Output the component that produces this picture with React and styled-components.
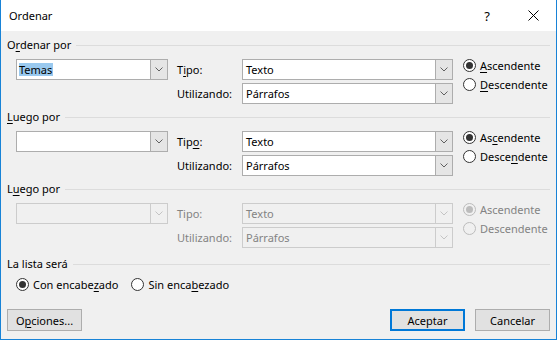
import React from 'react';
import styled, { createGlobalStyle } from 'styled-components';

const Global = createGlobalStyle`
  html, body { margin: 0; padding: 0; background: #ffffff; }
  body {
    font-family: "Segoe UI", "Noto Sans", sans-serif;
    font-size: 11px;
    color: #000000;
  }
  * { box-sizing: border-box; }
`;

const Window = styled.div`
  width: 557px;
  height: 340px;
  display: flex;
  flex-direction: column;
  background: #f0f0f0;
  border: 1px solid #1883d7;
  border-top: none;
`;

const TitleBar = styled.div`
  height: 31px;
  flex-shrink: 0;
  background: #ffffff;
  display: flex;
  align-items: center;
`;

const Title = styled.div`
  flex: 1;
  padding-left: 8px;
  font-size: 11px;
  line-height: 16px;
`;

const CaptionButton = styled.div`
  width: 46px;
  height: 31px;
  display: flex;
  align-items: center;
  justify-content: center;
  font-size: 13px;
  color: #000;
`;

const Body = styled.div`
  flex: 1;
  display: flex;
  flex-direction: column;
  padding: 6px 6px 8px 6px;
`;

const Section = styled.div`
  margin-top: ${p => p.$gap || 0}px;
`;

const Header = styled.div`
  height: 16px;
  display: flex;
  align-items: center;
  line-height: 16px;
  white-space: nowrap;
  &::after {
    content: '';
    flex: 1;
    height: 1px;
    margin-left: 5px;
    background: #dcdcdc;
  }
`;

const Content = styled.div`
  display: flex;
  align-items: flex-start;
  margin-top: 6px;
  padding-left: 9px;
`;

const Key = styled.span`
  text-decoration: underline;
  text-underline-offset: 2px;
`;

const ComboBox = styled.div`
  width: ${p => p.$w}px;
  height: 21px;
  flex-shrink: 0;
  display: flex;
  border: 1px solid ${p => (p.$disabled ? '#cccccc' : '#adadad')};
  background: ${p => (p.$disabled ? '#f0f0f0' : '#ffffff')};
`;

const ComboText = styled.div`
  flex: 1;
  padding-left: ${p => p.$pad}px;
  line-height: 19px;
  white-space: nowrap;
  overflow: hidden;
  color: ${p => (p.$disabled ? '#838383' : '#000000')};
`;

const Selected = styled.span`
  display: inline-block;
  background: #99c9ef;
  line-height: 13px;
  padding: 0 1px 0 0;
`;

const DropButton = styled.div`
  width: 17px;
  display: flex;
  align-items: center;
  justify-content: center;
  border-left: 1px solid ${p => (p.$disabled ? '#cccccc' : '#adadad')};
  background: ${p => (p.$disabled ? '#f0f0f0' : '#e5e5e5')};
`;

const Fields = styled.div`
  display: grid;
  grid-template-columns: 65px 211px;
  row-gap: 3px;
  align-items: center;
  margin-left: 9px;
`;

const FieldLabel = styled.div`
  color: ${p => (p.$disabled ? '#838383' : '#000000')};
  line-height: 16px;
`;

const RadioColumn = styled.div`
  display: flex;
  flex-direction: column;
  gap: 6px;
  margin-left: 10px;
`;

const RadioRow = styled.div`
  display: flex;
  gap: ${p => p.$gap || 0}px;
  margin-top: 6px;
  padding-left: 9px;
`;

const RadioItem = styled.label`
  display: flex;
  align-items: center;
  height: 13px;
  white-space: nowrap;
  color: ${p => (p.$disabled ? '#838383' : '#000000')};
`;

const Circle = styled.span`
  width: 13px;
  height: 13px;
  border-radius: 50%;
  flex-shrink: 0;
  display: flex;
  align-items: center;
  justify-content: center;
  border: 1px solid ${p => (p.$disabled ? '#bcbcbc' : '#333333')};
  background: ${p => (p.$disabled ? '#f0f0f0' : '#ffffff')};
  margin-right: 4px;
  &::after {
    content: '';
    display: ${p => (p.$checked ? 'block' : 'none')};
    width: 7px;
    height: 7px;
    border-radius: 50%;
    background: ${p => (p.$disabled ? '#bcbcbc' : '#333333')};
  }
`;

const Buttons = styled.div`
  margin-top: auto;
  display: flex;
  align-items: center;
`;

const Button = styled.div`
  width: 75px;
  height: 22px;
  display: flex;
  align-items: center;
  justify-content: center;
  background: #e1e1e1;
  border: ${p => (p.$default ? '2px solid #0078d7' : '1px solid #adadad')};
  margin-left: ${p => p.$ml || 0}px;
`;

const Chevron = ({ disabled }) => (
  <svg width="8" height="5" viewBox="0 0 8 5">
    <polyline
      points="0.5,0.5 4,4 7.5,0.5"
      fill="none"
      stroke={disabled ? '#c4c4c4' : '#606060'}
      strokeWidth="1"
    />
  </svg>
);

const Combo = ({ w, disabled, pad = 3, children }) => (
  <ComboBox $w={w} $disabled={disabled}>
    <ComboText $pad={pad} $disabled={disabled}>{children}</ComboText>
    <DropButton $disabled={disabled}>
      <Chevron disabled={disabled} />
    </DropButton>
  </ComboBox>
);

const Radio = ({ checked, disabled, children }) => (
  <RadioItem $disabled={disabled}>
    <Circle $checked={checked} $disabled={disabled} />
    {children}
  </RadioItem>
);

const SortSection = ({ gap, title, first, tipo, asc, desc, disabled }) => (
  <Section $gap={gap}>
    <Header>{title}</Header>
    <Content>
      <Combo w={152} pad={2} disabled={disabled}>{first}</Combo>
      <Fields>
        <FieldLabel $disabled={disabled}>{tipo}</FieldLabel>
        <Combo w={211} disabled={disabled}>Texto</Combo>
        <FieldLabel $disabled={disabled}>Utilizando:</FieldLabel>
        <Combo w={211} disabled={disabled}>Párrafos</Combo>
      </Fields>
      <RadioColumn>
        <Radio checked disabled={disabled}>{asc}</Radio>
        <Radio disabled={disabled}>{desc}</Radio>
      </RadioColumn>
    </Content>
  </Section>
);

export default function App() {
  return (
    <>
      <Global />
      <Window>
        <TitleBar>
          <Title>Ordenar</Title>
          <CaptionButton>?</CaptionButton>
          <CaptionButton>
            <svg width="11" height="11" viewBox="0 0 11 11">
              <path d="M0.5 0.5 L10.5 10.5 M10.5 0.5 L0.5 10.5" stroke="#000" strokeWidth="1" fill="none" />
            </svg>
          </CaptionButton>
        </TitleBar>
        <Body>
          <SortSection
            title={<span>O<Key>r</Key>denar por</span>}
            first={<Selected>Temas</Selected>}
            tipo={<span>T<Key>i</Key>po:</span>}
            asc={<span><Key>A</Key>scendente</span>}
            desc={<span><Key>D</Key>escendente</span>}
          />
          <SortSection
            gap={5}
            title={<span><Key>L</Key>uego por</span>}
            first=""
            tipo={<span>Tip<Key>o</Key>:</span>}
            asc={<span>As<Key>c</Key>endente</span>}
            desc={<span>Desce<Key>n</Key>dente</span>}
          />
          <SortSection
            gap={5}
            disabled
            title={<span>L<Key>u</Key>ego por</span>}
            first=""
            tipo="Tipo:"
            asc="Ascendente"
            desc="Descendente"
          />
          <Section $gap={8}>
            <Header>La lista será</Header>
            <RadioRow $gap={13}>
              <Radio checked>Con encabe<Key>z</Key>ado</Radio>
              <Radio>Sin enca<Key>b</Key>ezado</Radio>
            </RadioRow>
          </Section>
          <Buttons>
            <Button>O<Key>p</Key>ciones...</Button>
            <Button $default $ml={308}>Aceptar</Button>
            <Button $ml={10}>Cancelar</Button>
          </Buttons>
        </Body>
      </Window>
    </>
  );
}
